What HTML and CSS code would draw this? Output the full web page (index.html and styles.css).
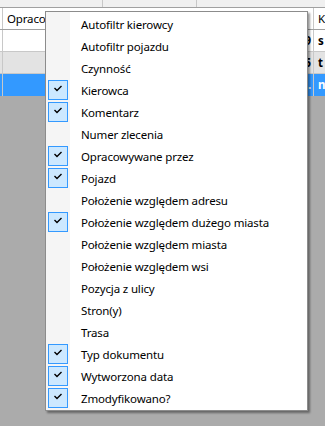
FILE: index.html
```html
<!DOCTYPE html>
<html lang="pl">
<head>
  <meta charset="UTF-8">
  <title>Kolumny</title>
  <link rel="stylesheet" href="styles.css">
</head>
<body>

<div class="grid">
  <div class="band">
    <div class="band-cell c1"></div>
    <div class="band-cell c2"></div>
    <div class="band-cell"></div>
  </div>
  <div class="row head">
    <div class="cell"></div>
    <div class="cell wide">Opracow<span class="drop"></span></div>
    <div class="cell">K</div>
  </div>
  <div class="row">
    <div class="cell"></div>
    <div class="cell wide num">9</div>
    <div class="cell bold">s</div>
  </div>
  <div class="row alt">
    <div class="cell"></div>
    <div class="cell wide num">5</div>
    <div class="cell bold">t</div>
  </div>
  <div class="row sel">
    <div class="cell"></div>
    <div class="cell wide num">.</div>
    <div class="cell bold">n</div>
  </div>
</div>

<div class="menu">
  <div class="item"><span class="box"></span><span class="label">Autofiltr kierowcy</span></div>
  <div class="item"><span class="box"></span><span class="label">Autofiltr pojazdu</span></div>
  <div class="item"><span class="box"></span><span class="label">Czynność</span></div>
  <div class="item on"><span class="box"><svg width="20" height="20" viewBox="0 0 20 20"><polyline points="6.5,8 9,10.5 13.5,6" /></svg></span><span class="label">Kierowca</span></div>
  <div class="item on"><span class="box"><svg width="20" height="20" viewBox="0 0 20 20"><polyline points="6.5,8 9,10.5 13.5,6" /></svg></span><span class="label">Komentarz</span></div>
  <div class="item"><span class="box"></span><span class="label">Numer zlecenia</span></div>
  <div class="item on"><span class="box"><svg width="20" height="20" viewBox="0 0 20 20"><polyline points="6.5,8 9,10.5 13.5,6" /></svg></span><span class="label">Opracowywane przez</span></div>
  <div class="item on"><span class="box"><svg width="20" height="20" viewBox="0 0 20 20"><polyline points="6.5,8 9,10.5 13.5,6" /></svg></span><span class="label">Pojazd</span></div>
  <div class="item"><span class="box"></span><span class="label">Położenie względem adresu</span></div>
  <div class="item on"><span class="box"><svg width="20" height="20" viewBox="0 0 20 20"><polyline points="6.5,8 9,10.5 13.5,6" /></svg></span><span class="label">Położenie względem dużego miasta</span></div>
  <div class="item"><span class="box"></span><span class="label">Położenie względem miasta</span></div>
  <div class="item"><span class="box"></span><span class="label">Położenie względem wsi</span></div>
  <div class="item"><span class="box"></span><span class="label">Pozycja z ulicy</span></div>
  <div class="item"><span class="box"></span><span class="label">Stron(y)</span></div>
  <div class="item"><span class="box"></span><span class="label">Trasa</span></div>
  <div class="item on"><span class="box"><svg width="20" height="20" viewBox="0 0 20 20"><polyline points="6.5,8 9,10.5 13.5,6" /></svg></span><span class="label">Typ dokumentu</span></div>
  <div class="item on"><span class="box"><svg width="20" height="20" viewBox="0 0 20 20"><polyline points="6.5,8 9,10.5 13.5,6" /></svg></span><span class="label">Wytworzona data</span></div>
  <div class="item on"><span class="box"><svg width="20" height="20" viewBox="0 0 20 20"><polyline points="6.5,8 9,10.5 13.5,6" /></svg></span><span class="label">Zmodyfikowano?</span></div>
</div>

</body>
</html>
```

FILE: styles.css
```css
body {
  margin: 0;
  width: 325px;
  height: 426px;
  overflow: hidden;
  background: #ababab;
  font-family: "Noto Sans", "Open Sans", sans-serif;
  font-size: 11.5px;
  letter-spacing: -0.15px;
  color: #000;
  position: relative;
}
.grid {
  background: #fff;
}
.band {
  display: grid;
  grid-template-columns: 103px 94px 1fr;
  height: 7px;
  background: #f0f0f0;
  border-bottom: 1px solid #a0a0a0;
}
.band-cell.c1, .band-cell.c2 {
  border-right: 1px solid #c8c8c8;
}
.row {
  display: grid;
  grid-template-columns: 3px 311px 1fr;
  height: 21px;
  border-bottom: 1px solid #c8c8c8;
  background: #fff;
}
.row.head {
  border-bottom-color: #a0a0a0;
}
.row.alt {
  background: #e3e3e3;
}
.row.sel {
  background: #3399ff;
  color: #fff;
  border-bottom: none;
  height: 22px;
}
.cell {
  border-right: 1px solid #c8c8c8;
  padding-left: 4px;
  line-height: 21px;
  white-space: nowrap;
  overflow: hidden;
  position: relative;
}
.cell:first-child {
  padding: 0;
}
.cell:last-child {
  border-right: none;
}
.cell.num {
  text-align: right;
  padding-right: 2px;
  font-weight: bold;
}
.bold {
  font-weight: bold;
}
.drop {
  position: absolute;
  right: 6px;
  top: 9px;
  border-left: 3px solid transparent;
  border-right: 3px solid transparent;
  border-top: 4px solid #222;
}
.menu {
  position: absolute;
  left: 45px;
  top: 11px;
  width: 261px;
  padding: 1px 0;
  border: 1px solid #8c8c8c;
  background: linear-gradient(to right, #f5f5f5 24px, #fff 24px);
  box-shadow: 2px 2px 2px rgba(0, 0, 0, 0.4);
}
.item {
  display: flex;
  align-items: center;
  height: 22px;
}
.box {
  width: 20px;
  height: 20px;
  margin-left: 2px;
  box-sizing: border-box;
}
.item.on .box {
  background: #cce8ff;
  border: 1px solid #3399ff;
}
.box svg {
  display: block;
  margin: -1px;
}
.box polyline {
  fill: none;
  stroke: #000;
  stroke-width: 1.4;
}
.label {
  margin-left: 13px;
  white-space: nowrap;
}
```
